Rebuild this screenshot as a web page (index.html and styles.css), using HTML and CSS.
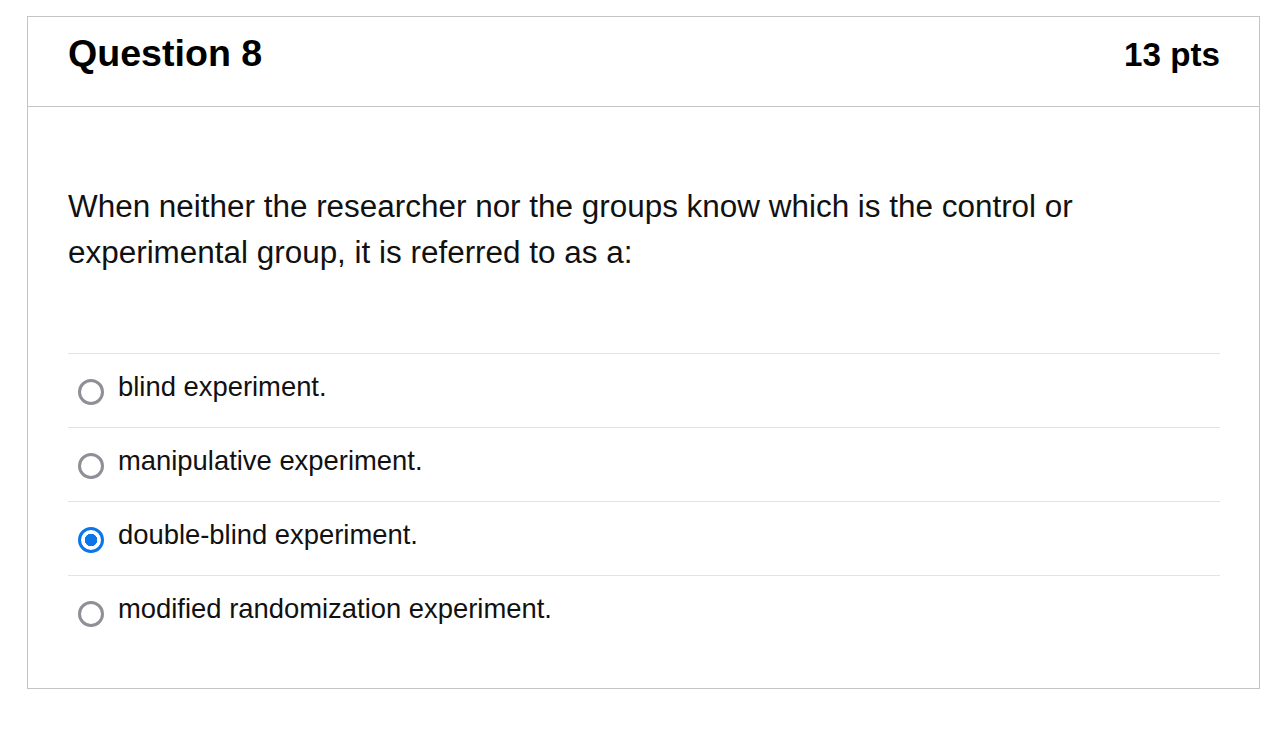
FILE: index.html
```html
<!DOCTYPE html>
<html>
<head>
<meta charset="utf-8">
<link rel="stylesheet" href="styles.css">
</head>
<body>
<div class="card">
  <div class="header">
    <h2 class="title">Question 8</h2>
    <div class="pts">13 pts</div>
  </div>
  <div class="body">
    <p class="question">When neither the researcher nor the groups know which is the control or experimental group, it is referred to as a:</p>
    <div class="answers">
      <label class="answer"><span class="radio"></span><span class="atext">blind experiment.</span></label>
      <label class="answer"><span class="radio"></span><span class="atext">manipulative experiment.</span></label>
      <label class="answer"><span class="radio checked"></span><span class="atext">double-blind experiment.</span></label>
      <label class="answer"><span class="radio"></span><span class="atext">modified randomization experiment.</span></label>
    </div>
  </div>
</div>
</body>
</html>
```
FILE: styles.css
```css
html, body {
  margin: 0;
  padding: 0;
  background: #ffffff;
}
body {
  padding: 16px 26px 0 27px;
  font-family: "Liberation Sans", Arial, sans-serif;
  color: #111111;
}
.card {
  border: 1px solid #c4c4c4;
  height: 673px;
  box-sizing: border-box;
}
.header {
  display: flex;
  justify-content: space-between;
  align-items: baseline;
  height: 90px;
  padding: 18px 39px 0 40px;
  border-bottom: 1px solid #c4c4c4;
  box-sizing: border-box;
}
.title {
  margin: 0;
  font-size: 37.6px;
  font-weight: bold;
  color: #000;
  line-height: 1;
}
.pts {
  font-size: 33.2px;
  font-weight: bold;
  color: #000;
  line-height: 1;
}
.body {
  padding: 77px 39px 0 40px;
}
.question {
  margin: 0;
  font-size: 31.45px;
  line-height: 46px;
  color: #111;
}
.answers {
  margin-top: 77px;
}
.answer {
  display: flex;
  align-items: center;
  height: 74px;
  border-top: 1px solid #e3e3e3;
  box-sizing: border-box;
  padding-left: 10px;
}
.radio {
  width: 20px;
  height: 20px;
  border: 3.5px solid #8f8f97;
  border-radius: 50%;
  box-sizing: content-box;
  margin-right: 14px;
  margin-top: 2px;
  flex: none;
  background: #fff;
}
.radio.checked {
  border-color: #0b76ea;
  background: radial-gradient(circle, #0b76ea 0 6px, #ffffff 6.5px);
}
.atext {
  font-size: 27.4px;
  color: #111;
  margin-top: -8px;
}
```
